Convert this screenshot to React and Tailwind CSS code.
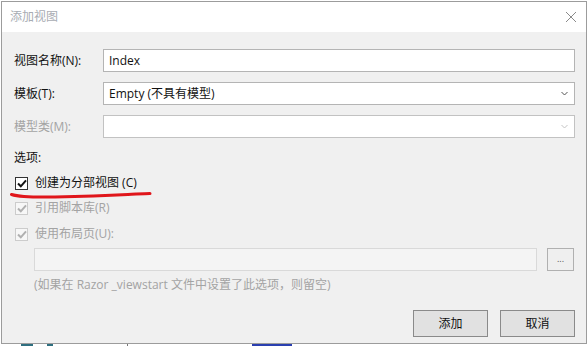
import React from 'react';

const font = { fontFamily: '"Open Sans", "Noto Sans CJK SC", sans-serif' };

const Chevron = ({ disabled }) => (
  <svg width="7" height="5" viewBox="0 0 7 5" className="shrink-0">
    <polyline points="0.5,1 3.5,4 6.5,1" fill="none" stroke={disabled ? '#c4c4c4' : '#555'} strokeWidth="1" />
  </svg>
);

const Check = ({ disabled }) => (
  <span
    className={`w-[13px] h-[13px] flex items-center justify-center border ${disabled ? 'border-[#cccccc] bg-[#f7f7f7]' : 'border-[#333] bg-white'}`}
  >
    <svg width="10" height="9" viewBox="0 0 10 9">
      <polyline points="1,4.5 3.8,7.3 9,1.3" fill="none" stroke={disabled ? '#b0b0b0' : '#111'} strokeWidth="2" />
    </svg>
  </span>
);

export default function App() {
  return (
    <div className="w-[588px] h-[346px] bg-white pt-px pl-px text-[12px] text-[#111] overflow-hidden" style={font}>
      <div className="w-[586px] h-[343px] border border-[#9c9c9c] flex flex-col bg-[#f0f0f0]">
        {/* title bar */}
        <div className="h-[30px] bg-white flex items-center justify-between pl-[8px] pr-[9px]">
          <span className="text-[#a8acb3]">添加视图</span>
          <svg width="12" height="12" viewBox="0 0 12 12">
            <path d="M1 1 L11 11 M11 1 L1 11" stroke="#8a8a8a" strokeWidth="1" />
          </svg>
        </div>

        <div className="flex flex-col pl-[12px] pr-[11px] pt-[17px]">
          <div className="flex items-center">
            <span className="w-[89px]">视图名称(N):</span>
            <div className="flex-1 h-[23px] bg-white border border-[#b4b4b4] flex items-center px-[5px]">Index</div>
          </div>
          <div className="flex items-center mt-[10px]">
            <span className="w-[89px]">模板(T):</span>
            <div className="flex-1 h-[23px] bg-white border border-[#b4b4b4] flex items-center justify-between pl-[5px] pr-[6px]">
              <span>Empty (不具有模型)</span>
              <Chevron />
            </div>
          </div>
          <div className="flex items-center mt-[10px]">
            <span className="w-[89px] text-[#a3a3a3]">模型类(M):</span>
            <div className="flex-1 h-[23px] bg-white border border-[#c2c2c2] flex items-center justify-end pr-[6px]">
              <Chevron disabled />
            </div>
          </div>

          <div className="mt-[12px] h-4 leading-4">选项:</div>

          <div className="relative mt-[9px] h-4 flex items-center gap-[7px] ml-px">
            <Check />
            <span>创建为分部视图 (C)</span>
            <svg className="absolute left-[-5px] top-[14px]" width="142" height="10" viewBox="0 0 142 10">
              <path d="M1.5 5.5 C 8 7.5, 20 8.5, 45 8 C 75 7.5, 100 6.5, 118 5.5 C 128 5, 135 4.5, 140 4.5" fill="none" stroke="#e0161b" strokeWidth="3" strokeLinecap="round" />
            </svg>
          </div>
          <div className="mt-[9px] h-4 flex items-center gap-[7px] ml-px text-[#a3a3a3]">
            <Check disabled />
            <span>引用脚本库(R)</span>
          </div>
          <div className="mt-[10px] h-4 flex items-center gap-[7px] ml-px text-[#a3a3a3]">
            <Check disabled />
            <span>使用布局页(U):</span>
          </div>

          <div className="mt-[6px] ml-[20px] flex items-center gap-[10px]">
            <div className="w-[503px] h-[23px] bg-[#f4f4f4] border border-[#d9d9d9]" />
            <div className="w-[27px] h-[23px] bg-[#efefef] border border-[#b0b0b0] flex items-center justify-center text-[9px] leading-none text-[#555] pb-[2px]">...</div>
          </div>
          <div className="mt-[6px] ml-[20px] h-4 leading-4 text-[#a3a3a3]">(如果在 Razor _viewstart 文件中设置了此选项，则留空)</div>

          <div className="mt-[17px] flex justify-end gap-[12px]">
            <div className="w-[75px] h-[27px] bg-[#e1e1e1] border border-[#8a8a8a] flex items-center justify-center">添加</div>
            <div className="w-[75px] h-[27px] bg-[#e1e1e1] border border-[#8a8a8a] flex items-center justify-center">取消</div>
          </div>
        </div>
      </div>
      <div className="flex gap-[14px] pl-[20px] h-[2px]">
        <span className="w-[12px] bg-[#2f6f80]" />
        <span className="w-[6px] bg-[#2f6f80]" />
        <span className="w-[1px] ml-[60px] bg-[#777]" />
        <span className="w-[40px] ml-[110px] bg-[#2a3fb0]" />
      </div>
    </div>
  );
}
